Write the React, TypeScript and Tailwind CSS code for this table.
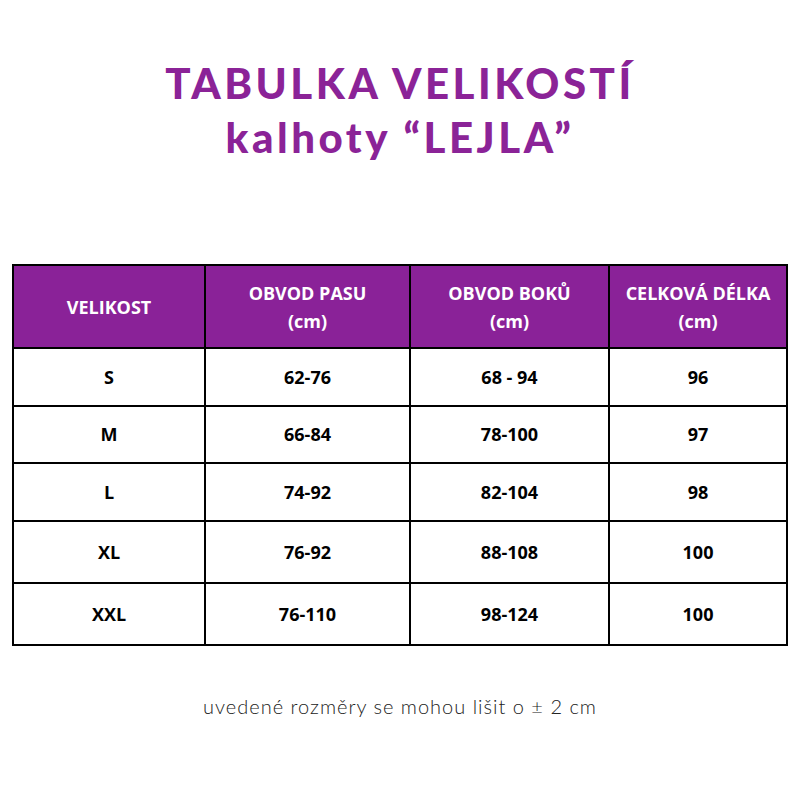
const rows = [
  ["S", "62-76", "68 - 94", "96"],
  ["M", "66-84", "78-100", "97"],
  ["L", "74-92", "82-104", "98"],
  ["XL", "76-92", "88-108", "100"],
  ["XXL", "76-110", "98-124", "100"],
];

const rowHeights = ["h-[58px]", "h-[57px]", "h-[58px]", "h-[62px]", "h-[62px]"];

export default function App() {
  return (
    <div className="w-[800px] h-[800px] bg-white flex flex-col items-center">
      <div
        className="pt-[56px] text-center text-[#8b2397] font-black text-[42px] leading-[54px] tracking-[3.5px]"
        style={{ fontFamily: "Lato, sans-serif" }}
      >
        <div>TABULKA VELIKOSTÍ</div>
        <div>kalhoty “LEJLA”</div>
      </div>

      <table
        className="mt-[100px] w-[776px] border-collapse border-2 border-black text-center"
        style={{ fontFamily: "'Open Sans', sans-serif" }}
      >
        <thead>
          <tr className="h-[83px] bg-[#8a2298] text-white font-bold text-[18px] leading-[28px]">
            <th className="w-[192px] border-2 border-black">VELIKOST</th>
            <th className="w-[205px] border-2 border-black">
              OBVOD PASU
              <br />
              (cm)
            </th>
            <th className="w-[199px] border-2 border-black">
              OBVOD BOKŮ
              <br />
              (cm)
            </th>
            <th className="border-2 border-black">
              CELKOVÁ DÉLKA
              <br />
              (cm)
            </th>
          </tr>
        </thead>
        <tbody>
          {rows.map((r, i) => (
            <tr key={i} className={`${rowHeights[i]} text-black font-bold text-[18px]`}>
              {r.map((c, j) => (
                <td key={j} className="border-2 border-black">
                  {c}
                </td>
              ))}
            </tr>
          ))}
        </tbody>
      </table>

      <div
        className="mt-[45px] text-[20px] text-[#222] font-light tracking-[1px]"
        style={{ fontFamily: "Lato, sans-serif" }}
      >
        uvedené rozměry se mohou lišit o ± 2 cm
      </div>
    </div>
  );
}
